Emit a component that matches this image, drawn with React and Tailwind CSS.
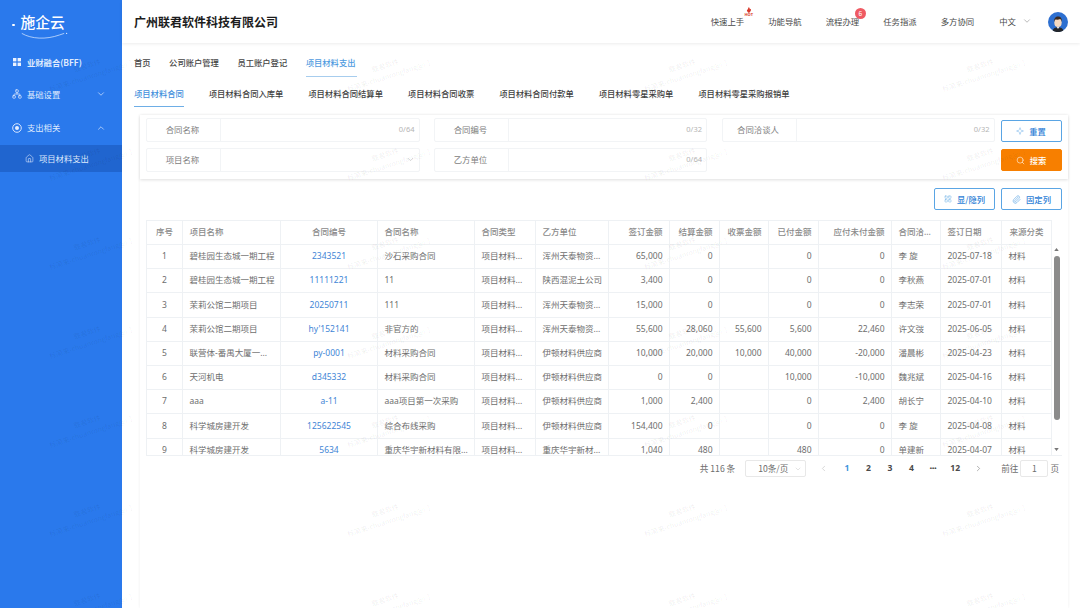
import React from "react";
import { ChevronDown, ChevronUp, ChevronLeft, ChevronRight, Network, Home, Search, Sparkle, LayoutGrid, Paperclip } from "lucide-react";

const F = { fontFamily: '"Noto Sans CJK SC", "Noto Sans", sans-serif' };
const T = { fontFamily: '"Noto Sans", "Noto Sans CJK SC", sans-serif' };

const rows = [
  ["1","碧桂园生态城一期工程","2343521","沙石采购合同","项目材料...","浑州天泰物资...","65,000","0","","0","0","李 旋","2025-07-18","材料"],
  ["2","碧桂园生态城一期工程","11111221","11","项目材料...","陕西混泥土公司","3,400","0","","0","0","李秋燕","2025-07-01","材料"],
  ["3","茉莉公馆二期项目","20250711","111","项目材料...","浑州天泰物资...","15,000","0","","0","0","李志荣","2025-07-01","材料"],
  ["4","茉莉公馆二期项目","hy'152141","非官方的","项目材料...","浑州天泰物资...","55,600","28,060","55,600","5,600","22,460","许文弢","2025-06-05","材料"],
  ["5","联营体-番禺大厦一...","py-0001","材料采购合同","项目材料...","伊顿材料供应商","10,000","20,000","10,000","40,000","-20,000","潘晨彬","2025-04-23","材料"],
  ["6","天河机电","d345332","材料采购合同","项目材料...","伊顿材料供应商","0","0","","10,000","-10,000","魏兆斌","2025-04-16","材料"],
  ["7","aaa","a-11","aaa项目第一次采购","项目材料...","伊顿材料供应商","1,000","2,400","","0","2,400","胡长宁","2025-04-10","材料"],
  ["8","科学城房建开发","125622545","综合布线采购","项目材料...","伊顿材料供应商","154,400","0","","0","0","李 旋","2025-04-08","材料"],
  ["9","科学城房建开发","5634","重庆华宇新材料有限...","项目材料...","重庆华宇新材...","1,040","480","","480","0","单建新","2025-04-07","材料"],
];

const heads = ["序号","项目名称","合同编号","合同名称","合同类型","乙方单位","签订金额","结算金额","收票金额","已付金额","应付未付金额","合同洽...","签订日期","来源分类"];

const aligns = ["text-center px-0","text-left px-[6.5px]","text-center px-[6.5px]","text-left px-[6.5px]","text-left px-[6.5px]","text-left px-[6.5px]","text-right px-[6.5px]","text-right px-[6.5px]","text-right px-[6.5px]","text-right px-[6.5px]","text-right px-[6.5px]","text-left px-[6.5px]","text-left px-[6.5px]","text-left px-[6.5px]"];
const headAligns = [...aligns.slice(0, 13), "text-center px-[6.5px]"];

const marks = Array.from({ length: 28 });

function Field({ label, count, select }) {
  return (
    <div className="flex h-[24px] border border-[#f2f4f6] rounded-[2px]">
      <div className="w-[74px] shrink-0 border-r border-[#f2f4f6] flex items-center justify-center text-[8.4px] text-[#7d7d7d] pr-[2px] pb-[1px]">{label}</div>
      <div className="flex-1 flex items-center justify-end pr-[4px] pb-[1px] text-[7.5px] text-[#b4b4b4]" style={T}>
        {select ? <ChevronDown className="w-[9px] h-[9px] text-[#b8b8b8]" strokeWidth={1.5} /> : count}
      </div>
    </div>
  );
}

function Btn({ icon, children, orange }) {
  return (
    <button className={`w-[61px] h-[22px] rounded-[2px] flex items-center justify-center gap-[5px] text-[8.3px] font-medium border ${orange ? "bg-[#f77f00] border-[#f77f00] text-white" : "bg-white border-[#5aa5e4] text-[#2f7fd6]"}`}>
      {icon}
      <span>{children}</span>
    </button>
  );
}

function Avatar() {
  return (
    <svg viewBox="0 0 20 20" className="w-[20px] h-[20px]">
      <circle cx="10" cy="10" r="10" fill="#2d6fd0" />
      <path d="M4.6 18.4c.8-2.300 2.700-3.200 5.400-3.200s4.600.9 5.400 3.200A10 10 0 0 1 4.600 18.400z" fill="#23262c" />
      <path d="M8.700 15.100h2.600L10 17z" fill="#f4f4f4" />
      <ellipse cx="10" cy="10.500" rx="3.700" ry="4.500" fill="#f5d9c0" />
      <path d="M6.200 10c-.5-3.600 1.500-5.600 3.900-5.600 2.400 0 4.200 2 3.700 5.600-.4-1.500-.9-2.400-1.600-2.900-1.600.7-3.700.6-4.800.4-.6.500-1 1.400-1.200 2.500z" fill="#3a2a22" />
    </svg>
  );
}

export default function App() {
  return (
    <div className="relative w-[1080px] h-[608px] overflow-hidden bg-white flex" style={F}>
      {/* sidebar */}
      <aside className="w-[122px] shrink-0 bg-[#2a79ec] text-white flex flex-col">
        <div className="h-[46px] pl-[12px] pt-[12px]">
          <div className="flex items-center gap-[6px] h-[20px]">
            <span className="w-[2.5px] h-[2.5px] rounded-full bg-white mt-[6px]" />
            <span className="text-[14.8px] leading-[20px] font-medium">施企云</span>
          </div>
          <svg viewBox="0 0 60 10" className="w-[58px] h-[8px] ml-[4px] -mt-[1px]">
            <path d="M1 3c12 7 30 8 47 2l6-2" stroke="#dceaff" strokeWidth="0.9" fill="none" />
            <circle cx="57" cy="3" r="0.8" fill="#dceaff" />
          </svg>
        </div>
        <div className="h-[32px] flex items-center pl-[13px] gap-[6px] text-[8.3px] font-bold text-[#dfeafd]">
          <svg viewBox="0 0 8 8" className="w-[8px] h-[8px]" fill="#eaf2ff"><rect width="3.400" height="3.400" /><rect x="4.600" width="3.400" height="3.400" /><rect y="4.600" width="3.400" height="3.400" /><rect x="4.600" y="4.600" width="3.400" height="3.400" /></svg>
          <span>业财融合(BFF)</span>
        </div>
        <div className="h-[32px] flex items-center pl-[12px] pr-[16px] gap-[5px] text-[8.3px] text-[#dfeafd]">
          <Network className="w-[10px] h-[10px]" strokeWidth={1.8} />
          <span className="flex-1">基础设置</span>
          <ChevronDown className="w-[10px] h-[10px] text-[#bcd5fa]" strokeWidth={2} />
        </div>
        <div className="h-[35px] flex items-center pl-[12px] pr-[16px] gap-[5px] text-[8.3px] text-[#dfeafd]">
          <svg viewBox="0 0 10 10" className="w-[10px] h-[10px]"><circle cx="5" cy="5" r="4.300" fill="none" stroke="#e6efff" strokeWidth="0.9" /><circle cx="5" cy="5" r="2" fill="#e6efff" /></svg>
          <span className="flex-1">支出相关</span>
          <ChevronUp className="w-[10px] h-[10px] text-[#bcd5fa]" strokeWidth={2} />
        </div>
        <div className="h-[27px] bg-[#2065cf] flex items-center pl-[25px] gap-[5px] text-[8.3px] text-[#dfeafd]">
          <Home className="w-[9px] h-[9px]" strokeWidth={1.5} />
          <span>项目材料支出</span>
        </div>
      </aside>

      {/* main */}
      <main className="flex-1 flex flex-col min-w-0">
        <header className="h-[43px] shrink-0 flex items-center pl-[12px] pr-[12px] shadow-[0_1px_3px_rgba(0,0,0,0.08)]">
          <h1 className="text-[12px] font-bold text-[#1c1c1c] flex-1">广州联君软件科技有限公司</h1>
          <nav className="flex items-center text-[8.4px] text-[#4a4a4a]">
            <span className="relative mr-[24px]">快速上手
              <span className="absolute -top-[8px] left-[31px] w-[14px] h-[10px] flex flex-col items-center">
                <svg viewBox="0 0 8 6" className="w-[8px] h-[6px]"><path d="M4 0c.3 1 1 1.300.9 2.400l1.100-.6c.2 1.700-.4 3.200-2 4.200-1.700-.8-2.500-2.300-1.900-3.700l.8.700C2.800 1.700 3.400.7 4 0z" fill="#d8392b" /></svg>
                <span className="text-[4px] leading-[4px] font-bold text-[#d8392b]" style={T}>HOT</span>
              </span>
            </span>
            <span className="mr-[24px]">功能导航</span>
            <span className="relative mr-[24px]">流程办理
              <span className="absolute -top-[7px] left-[29px] w-[11px] h-[11px] rounded-full bg-[#ef5a63] text-white text-[6.5px] flex items-center justify-center">6</span>
            </span>
            <span className="mr-[24px]">任务指派</span>
            <span className="mr-[25px]">多方协同</span>
            <span className="flex items-center gap-[6px] mr-[16px]">中文<ChevronDown className="w-[10px] h-[10px] text-[#8a8a8a]" strokeWidth={1.4} /></span>
            <Avatar />
          </nav>
        </header>

        {/* tabs */}
        <div className="h-[34px] shrink-0 pl-[12px] flex items-end gap-[18.5px] text-[8.3px] text-[#444] font-medium">
          {["首页","公司账户管理","员工账户登记"].map(t => <span key={t} className="h-[27px] leading-[24px]">{t}</span>)}
          <span className="h-[27px] leading-[24px] text-[#4f9be0] border-b border-[#a7cdee] w-[51px]">项目材料支出</span>
        </div>
        <div className="h-[30px] shrink-0 pl-[12px] flex items-end gap-[24.900px] text-[8.3px] text-[#3f3f3f] font-medium">
          <span className="h-[25px] leading-[23px] text-[#3f8fdc] border-b border-[#6eaee6]">项目材料合同</span>
          {["项目材料合同入库单","项目材料合同结算单","项目材料合同收票","项目材料合同付款单","项目材料零星采购单","项目材料零星采购报销单"].map(t => <span key={t} className="h-[25px] leading-[23px]">{t}</span>)}
        </div>

        <div className="mx-[18px] mt-[8px] flex-1 flex flex-col min-h-0 w-[928px] shadow-[0_0_3px_rgba(0,0,0,0.07)]">
          {/* search */}
          <section className="h-[64px] shrink-0 shadow-[0_1px_3px_rgba(0,0,0,0.13)] pl-[6px] pr-[6px] pt-[3px] flex gap-[6px]">
            <div className="grid grid-cols-[273.5px_273px_273px] gap-x-[14.5px] gap-y-[6px] content-start">
              <Field label="合同名称" count="0/64" />
              <Field label="合同编号" count="0/32" />
              <Field label="合同洽谈人" count="0/32" />
              <Field label="项目名称" select />
              <Field label="乙方单位" count="0/64" />
            </div>
            <div className="flex flex-col gap-[7px] pt-[2px]">
              <Btn icon={<Sparkle className="w-[8px] h-[8px] text-[#6db0ea]" strokeWidth={1.4} />}>重置</Btn>
              <Btn orange icon={<Search className="w-[9px] h-[9px]" strokeWidth={1.5} />}>搜索</Btn>
            </div>
          </section>

          {/* list */}
          <section className="flex-1 min-h-0 mt-[2px] px-[6px] flex flex-col">
            <div className="h-[39px] shrink-0 flex items-end justify-end gap-[6px] pb-[10px]">
              <Btn icon={<LayoutGrid className="w-[8px] h-[8px] text-[#5aa5e4]" strokeWidth={1.3} />}>显/隐列</Btn>
              <Btn icon={<Paperclip className="w-[9px] h-[9px] text-[#5aa5e4]" strokeWidth={1.6} />}>固定列</Btn>
            </div>
            <div className="relative h-[236px] shrink-0 overflow-hidden border-b border-[#eef1f4]">
              <table className="table-fixed border-collapse w-[905px] text-[8.5px] text-[#6e6e6e]" style={T}>
                <colgroup>
                  <col className="w-[36px]" /><col className="w-[98px]" /><col className="w-[97px]" /><col className="w-[97px]" /><col className="w-[61px]" /><col className="w-[73px]" /><col className="w-[61px]" /><col className="w-[50px]" /><col className="w-[49px]" /><col className="w-[50px]" /><col className="w-[73px]" /><col className="w-[49px]" /><col className="w-[61px]" /><col className="w-[50px]" />
                </colgroup>
                <thead>
                  <tr className="h-[24px]">
                    {heads.map((h, i) => <th key={h} className={`border border-[#eef1f4] font-medium text-[#8a8a8a] whitespace-nowrap overflow-hidden ${headAligns[i]}`}>{h}</th>)}
                  </tr>
                </thead>
                <tbody>
                  {rows.map(r => (
                    <tr key={r[0]} className="h-[24.2px]">
                      {r.map((c, i) => (
                        <td key={i} className={`border border-[#eef1f4] whitespace-nowrap overflow-hidden ${aligns[i]} ${i === 2 ? "text-[#3f86d6]" : ""}`}>{c}</td>
                      ))}
                    </tr>
                  ))}
                </tbody>
              </table>
              {/* scrollbar */}
              <div className="absolute right-0 top-[24px] bottom-0 w-[11px] flex flex-col items-center">
                <svg viewBox="0 0 6 4" className="w-[5px] h-[3px] mt-[4px]"><path d="M3 0l3 4H0z" fill="#777" /></svg>
                <div className="w-[6px] h-[164px] mt-[5px] rounded-[3px] bg-[#8b8b8b]" />
                <svg viewBox="0 0 6 4" className="w-[5px] h-[3px] mt-[28px]"><path d="M3 4l3-4H0z" fill="#777" /></svg>
              </div>
            </div>
            {/* pager */}
            <div className="h-[25px] shrink-0 pr-[3px] flex items-center justify-end text-[8.6px] text-[#6e6e6e]">
              <span className="mr-[10px]">共 116 条</span>
              <div className="w-[61px] h-[17px] border border-[#e8e8e8] rounded-[2px] flex items-center pl-[12px] pr-[3px] mr-[13px]">
                <span className="flex-1">10条/页</span>
                <ChevronDown className="w-[8px] h-[8px] text-[#c8c8c8]" strokeWidth={1.5} />
              </div>
              <ChevronLeft className="w-[9px] h-[9px] text-[#bdbdbd] mr-[8px]" strokeWidth={1.5} />
              <div className="flex items-center font-bold text-[#4a4a4a]" style={T}>
                <span className="w-[21.5px] text-center text-[#3f95dd]">1</span>
                <span className="w-[21.5px] text-center">2</span>
                <span className="w-[21.5px] text-center">3</span>
                <span className="w-[21.5px] text-center">4</span>
                <span className="w-[22px] text-center text-[6px]">•••</span>
                <span className="w-[22px] text-center">12</span>
              </div>
              <ChevronRight className="w-[9px] h-[9px] text-[#777] ml-[8px] mr-[18px]" strokeWidth={1.5} />
              <span>前往</span>
              <div className="w-[28px] h-[17px] border border-[#e8e8e8] rounded-[2px] flex items-center justify-center mx-[2px]">1</div>
              <span>页</span>
            </div>
          </section>
        </div>
      </main>

      {/* watermark */}
      <div className="absolute left-[-60px] top-[26px] w-[1190px] h-[623px] pointer-events-none grid grid-cols-4 grid-rows-7">
        {marks.map((_, i) => (
          <div key={i} className="-rotate-[18deg] text-center text-[7px] leading-[11px] text-[#000000]/[0.08] whitespace-nowrap flex flex-col items-center justify-center">
            <span>联君软件</span>
            <span>标简来-chuanrongfang@门</span>
          </div>
        ))}
      </div>
    </div>
  );
}
